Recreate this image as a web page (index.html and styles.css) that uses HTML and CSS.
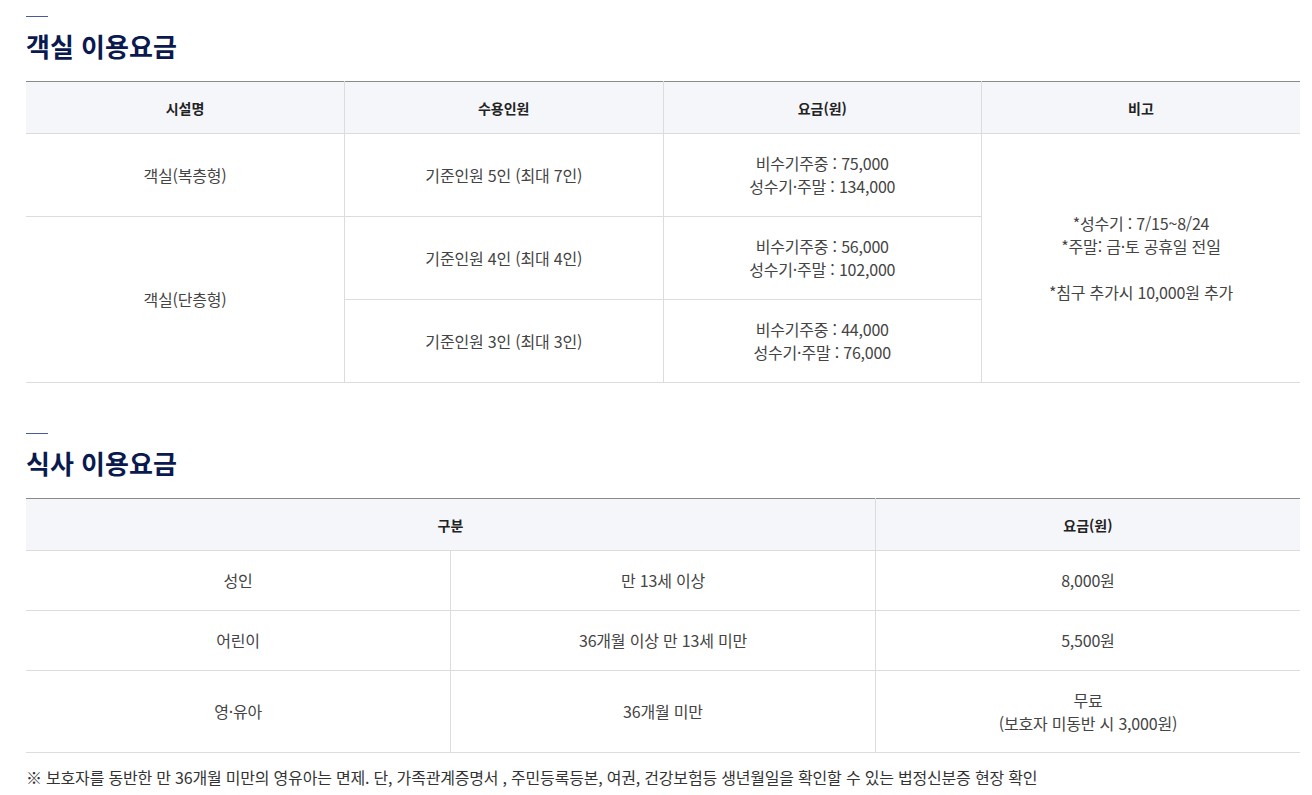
FILE: index.html
```html
<!DOCTYPE html>
<html lang="ko">
<head>
<meta charset="utf-8">
<title>이용요금</title>
<link rel="stylesheet" href="styles.css">
</head>
<body>
<div class="page">
  <section class="section">
    <h2 class="section-title">객실 이용요금</h2>
    <table class="fee-table room">
      <colgroup><col><col><col><col></colgroup>
      <thead>
        <tr><th>시설명</th><th>수용인원</th><th>요금(원)</th><th>비고</th></tr>
      </thead>
      <tbody>
        <tr>
          <td>객실(복층형)</td>
          <td>기준인원 5인 (최대 7인)</td>
          <td>비수기주중 : 75,000<br>성수기·주말 : 134,000</td>
          <td rowspan="3">*성수기 : 7/15~8/24<br>*주말: 금·토 공휴일 전일<br><br>*침구 추가시 10,000원 추가</td>
        </tr>
        <tr>
          <td rowspan="2">객실(단층형)</td>
          <td>기준인원 4인 (최대 4인)</td>
          <td>비수기주중 : 56,000<br>성수기·주말 : 102,000</td>
        </tr>
        <tr>
          <td>기준인원 3인 (최대 3인)</td>
          <td>비수기주중 : 44,000<br>성수기·주말 : 76,000</td>
        </tr>
      </tbody>
    </table>
  </section>

  <section class="section second">
    <h2 class="section-title">식사 이용요금</h2>
    <table class="fee-table meal">
      <colgroup><col><col><col></colgroup>
      <thead>
        <tr><th colspan="2">구분</th><th>요금(원)</th></tr>
      </thead>
      <tbody>
        <tr class="short"><td>성인</td><td>만 13세 이상</td><td>8,000원</td></tr>
        <tr class="short"><td>어린이</td><td>36개월 이상 만 13세 미만</td><td>5,500원</td></tr>
        <tr class="tall"><td>영·유아</td><td>36개월 미만</td><td>무료<br>(보호자 미동반 시 3,000원)</td></tr>
      </tbody>
    </table>
    <p class="note">※ 보호자를 동반한 만 36개월 미만의 영유아는 면제. 단, 가족관계증명서 , 주민등록등본, 여권, 건강보험등 생년월일을 확인할 수 있는 법정신분증 현장 확인</p>
  </section>
</div>
</body>
</html>
```
FILE: styles.css
```css
* { box-sizing: border-box; }
html, body { margin: 0; padding: 0; background: #fff; }
body {
  font-family: "Noto Sans CJK KR", "Noto Sans", sans-serif;
  color: #444;
}
.page {
  padding: 16px 12px 0 26px;
}
.section-title {
  margin: 0;
  font-size: 26px;
  font-weight: 700;
  letter-spacing: 0;
  line-height: 32px;
  color: #0b1a4e;
}
.section-title::before {
  content: "";
  display: block;
  width: 22px;
  height: 1px;
  background: #4b5a99;
  margin-bottom: 13px;
}
.fee-table {
  width: 100%;
  table-layout: fixed;
  border-collapse: collapse;
  margin-top: 19px;
  border-top: 1px solid #8a8a8a;
}
.fee-table th {
  height: 52px;
  padding: 0;
  background: #f5f6fa;
  font-size: 14px;
  font-weight: 700;
  color: #222;
  border-bottom: 1px solid #dcdcdc;
  border-left: 1px solid #dcdcdc;
  text-align: center;
}
.fee-table td {
  padding: 0;
  font-size: 16px;
  letter-spacing: -0.2px;
  line-height: 23px;
  color: #444;
  text-align: center;
  vertical-align: middle;
  border-bottom: 1px solid #dcdcdc;
  border-left: 1px solid #dcdcdc;
}
.fee-table th:first-child,
.fee-table tr > td:first-child { border-left: none; }
.fee-table.room tbody tr:nth-child(3) td:first-child { border-left: 1px solid #dcdcdc; }
.fee-table.room td { height: 83px; }
.fee-table.meal .short td { height: 60px; }
.fee-table.meal .tall td { height: 82px; }
.second { margin-top: 50px; }
.note {
  margin: 13px 0 0;
  font-size: 16px;
  letter-spacing: -0.2px;
  line-height: 22px;
  color: #333;
}
```
